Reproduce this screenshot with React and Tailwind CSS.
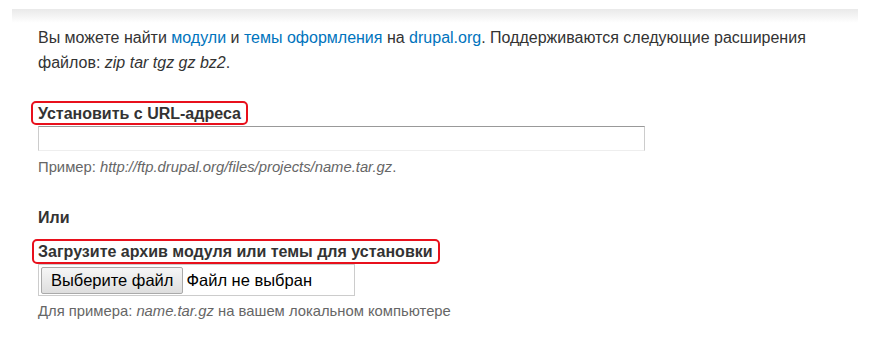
export default function App() {
  return (
    <div className="w-[870px] h-[342px] bg-white overflow-hidden font-['Liberation_Sans',Arial,sans-serif] text-[#333]">
      {/* header shadow */}
      <div className="mx-[12px] mt-[9px] h-[14px] bg-gradient-to-b from-[#e9e9e9] to-white" />

      <div className="pl-[38px] pr-[40px]">
        {/* Intro */}
        <p className="mt-[2px] text-[16px] leading-[25px]">
          Вы можете найти <a className="text-[#0074bd]">модули</a> и{" "}
          <a className="text-[#0074bd]">темы оформления</a> на{" "}
          <a className="text-[#0074bd]">drupal.org</a>. Поддерживаются следующие расширения
          файлов: <em>zip tar tgz gz bz2</em>.
        </p>

        {/* URL */}
        <div className="mt-[29px]">
          <label className="relative block w-fit text-[16px] font-bold leading-[20px]">
            Установить с URL-адреса
            <span className="absolute -left-[7px] -right-[7px] -top-[3px] -bottom-[1px] border-2 border-[#e8101c] rounded-[5px]" />
          </label>
          <input
            type="text"
            className="block mt-[2px] w-[607px] h-[25px] border border-[#ccc] border-t-[#999] border-b-[#eee] outline-none"
          />
          <p className="mt-[7px] text-[14.8px] leading-[18px] text-[#666]">
            Пример: <em>http://ftp.drupal.org/files/projects/name.tar.gz</em>.
          </p>
        </div>

        <p className="mt-[32px] text-[16px] font-bold leading-[20px]">Или</p>

        {/* Upload */}
        <div className="mt-[14px]">
          <label className="relative block w-fit text-[16px] font-bold leading-[20px]">
            Загрузите архив модуля или темы для установки
            <span className="absolute -left-[6px] -right-[7px] -top-[3px] -bottom-[2px] border-2 border-[#e8101c] rounded-[5px]" />
          </label>
          <div className="mt-[2px] w-[317px] h-[32px] border border-[#ccc] flex items-center pl-[2px] gap-[3px]">
            <span className="h-[27px] px-[9px] flex items-center text-[16.5px] text-black border border-[#aaa] rounded-[2px] bg-gradient-to-b from-[#f6f6f6] to-[#dedede]">
              Выберите файл
            </span>
            <span className="text-[16.5px] text-black">Файл не выбран</span>
          </div>
          <p className="mt-[6px] text-[14.8px] leading-[18px] text-[#666]">
            Для примера: <em>name.tar.gz</em> на вашем локальном компьютере
          </p>
        </div>
      </div>
    </div>
  );
}
